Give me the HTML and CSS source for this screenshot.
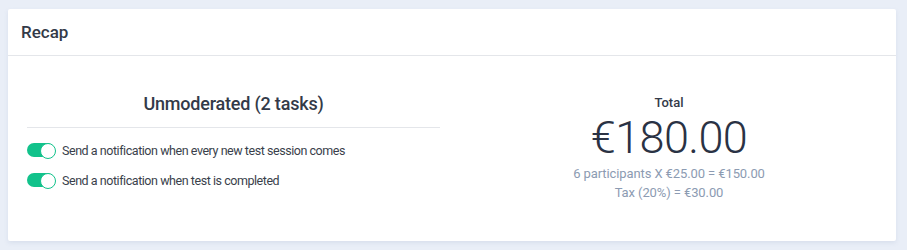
FILE: index.html
```html
<!DOCTYPE html>
<html lang="en">
<head>
    <meta charset="UTF-8">
    <title>Recap</title>
    <link rel="stylesheet" href="styles.css">
</head>
<body>
    <section class="recap-card">
        <div class="recap-header">Recap</div>
        <div class="recap-body">
            <div class="recap-tasks">
                <h2 class="recap-tasks-title">Unmoderated (2 tasks)</h2>
                <ul class="recap-options">
                    <li>
                        <span class="toggle toggle-on"></span>
                        <span>Send a notification when every new test session comes</span>
                    </li>
                    <li>
                        <span class="toggle toggle-on"></span>
                        <span>Send a notification when test is completed</span>
                    </li>
                </ul>
            </div>
            <div class="recap-total">
                <div class="total-label">Total</div>
                <div class="total-amount">€180.00</div>
                <div class="total-detail">6 participants X €25.00 = €150.00</div>
                <div class="total-detail">Tax (20%) = €30.00</div>
            </div>
        </div>
    </section>
</body>
</html>
```
FILE: styles.css
```css
* {
    box-sizing: border-box;
}
body {
    margin: 0;
    padding: 9px 11px 9px 8px;
    background: #e9eef7;
    font-family: Roboto, "Liberation Sans", sans-serif;
    color: #2f3542;
}
.recap-card {
    background: #fff;
    border-radius: 2px;
    box-shadow: 0 2px 4px rgba(120, 140, 180, 0.15);
}
.recap-header {
    height: 47px;
    padding: 0 13px;
    display: flex;
    align-items: center;
    font-size: 17px;
    font-weight: 500;
    color: #333a48;
    border-bottom: 1px solid #e4e6ea;
}
.recap-body {
    display: flex;
    gap: 21px;
    padding: 36px 19px 0;
    height: 185px;
}
.recap-tasks {
    width: 413px;
}
.recap-tasks-title {
    margin: 0;
    padding-bottom: 11px;
    text-align: center;
    font-size: 18px;
    line-height: 24px;
    font-weight: 500;
    letter-spacing: -0.2px;
    color: #333a48;
    border-bottom: 1px solid #e4e6ea;
}
.recap-options {
    list-style: none;
    margin: 12px 0 0;
    padding: 0;
}
.recap-options li {
    display: flex;
    align-items: center;
    gap: 8px;
    height: 20px;
    margin-bottom: 10px;
    font-size: 12.5px;
    letter-spacing: -0.45px;
    color: #3a3f4b;
}
.toggle {
    position: relative;
    width: 27px;
    height: 14px;
    border-radius: 7px;
    background: #d0d4da;
    flex-shrink: 0;
}
.toggle::after {
    content: "";
    position: absolute;
    top: 0;
    left: 0;
    width: 14px;
    height: 14px;
    border-radius: 50%;
    background: #fff;
    border: 1px solid #d0d4da;
}
.toggle-on {
    background: #12c28b;
}
.toggle-on::after {
    left: 13px;
    border-color: #12c28b;
}
.recap-total {
    flex: 1;
    text-align: center;
    padding-top: 2px;
}
.total-label {
    font-size: 13px;
    line-height: 18px;
    font-weight: 500;
    color: #333a48;
}
.total-amount {
    font-size: 45px;
    line-height: 52px;
    font-weight: 300;
    letter-spacing: -0.6px;
    color: #2a3244;
}
.total-detail {
    font-size: 13px;
    line-height: 19px;
    letter-spacing: -0.1px;
    color: #8c9bb2;
}
```
